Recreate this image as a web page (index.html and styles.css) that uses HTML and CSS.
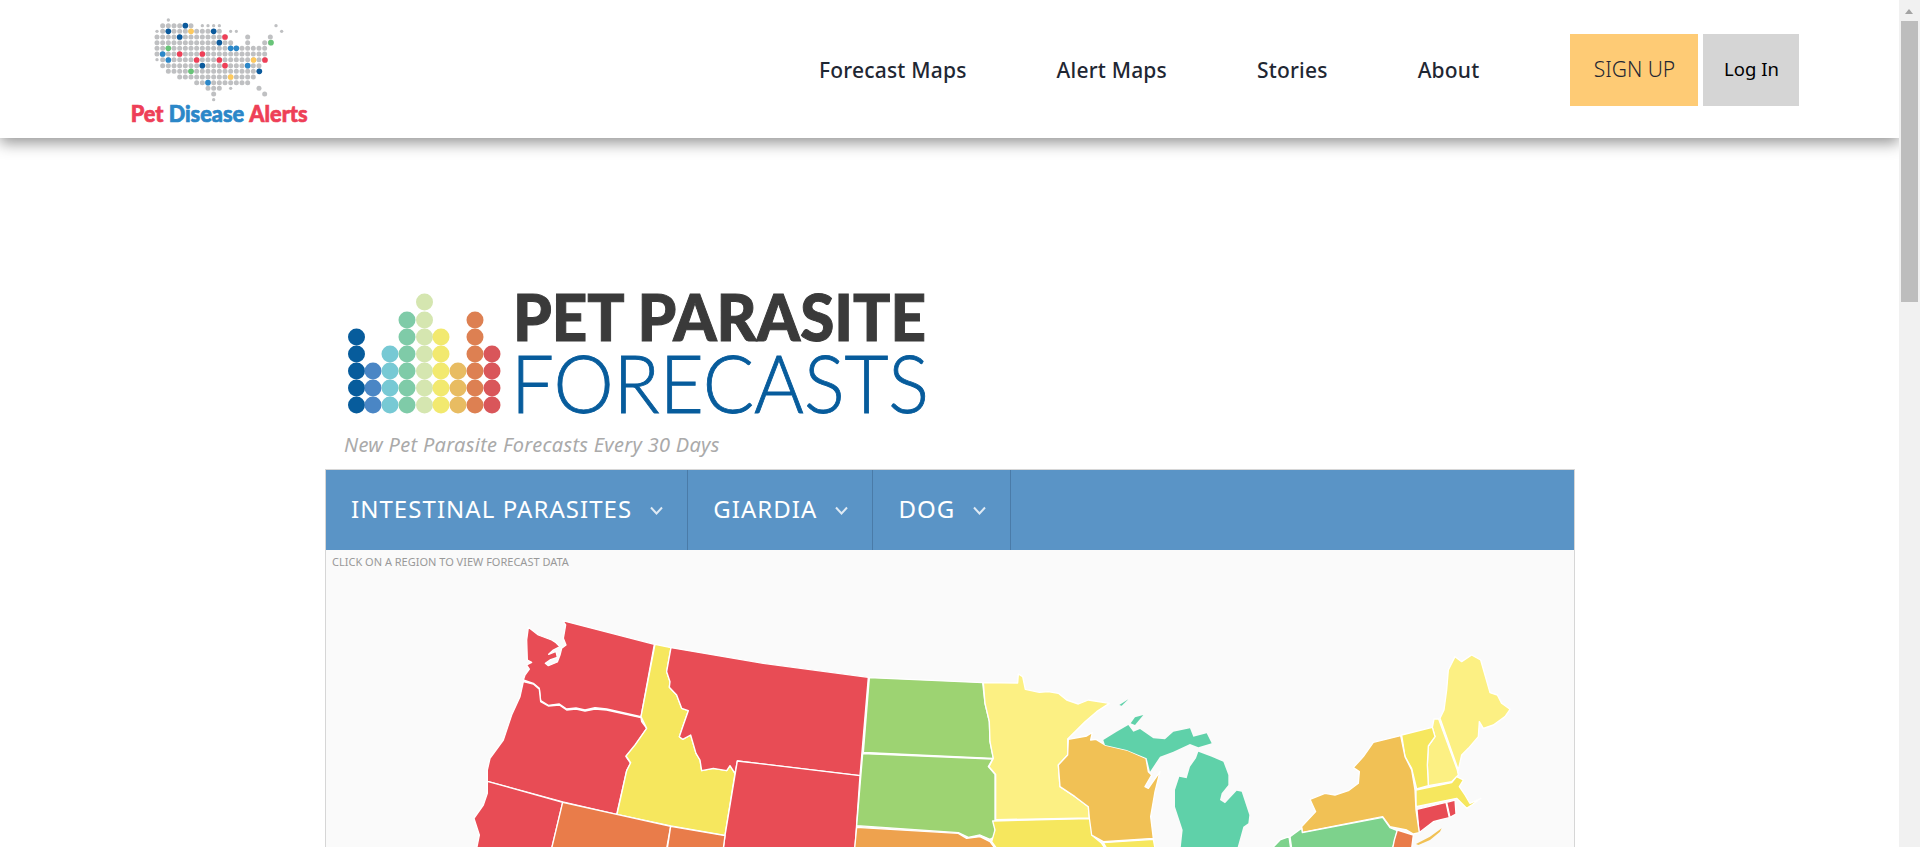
FILE: index.html
```html
<!DOCTYPE html>
<html lang="en">
<head>
<meta charset="utf-8">
<title>Pet Parasite Forecasts</title>
<link rel="stylesheet" href="styles.css">
</head>
<body>
<div class="page">
  <div class="main">
    <header class="topbar">
      <svg class="site-logo" viewBox="125 0 190 138" role="img" aria-label="Pet Disease Alerts">
        <g transform="translate(100 0) scale(.33333)">
          <g class="dots-small">
            <path d="M205,60H222"/><path d="M307,77H375"/><path d="M392,94H426"/><path d="M171,94H172"/><path d="M171,179H172"/><path d="M528,77H545"/><path d="M545,94H546"/><path d="M341,299H342"/><path d="M392,265H409"/>
          </g>
          <g class="dots">
            <path d="M188,77H290"/><path d="M188,94H375"/><path d="M171,111H392"/><path d="M443,111H444"/><path d="M511,111H528"/><path d="M171,128H409"/><path d="M443,128H444"/><path d="M494,128H528"/><path d="M171,145H511"/><path d="M171,162H511"/><path d="M188,179H511"/><path d="M188,197H494"/><path d="M205,214H494"/><path d="M239,231H477"/><path d="M290,248H460"/><path d="M324,265H375"/><path d="M477,265H478"/><path d="M341,282H342"/><path d="M494,282H495"/>
          </g>
          <g class="pin-navy"><circle cx="256" cy="77" r="8.5"/><circle cx="205" cy="94" r="8.5"/><circle cx="341" cy="94" r="8.5"/><circle cx="239" cy="111" r="8.5"/><circle cx="358" cy="128" r="8.5"/><circle cx="307" cy="197" r="8.5"/><circle cx="478" cy="214" r="8.5"/></g>
          <g class="pin-yellow"><circle cx="273" cy="94" r="8.5"/><circle cx="461" cy="180" r="8.5"/><circle cx="392" cy="231" r="8.5"/></g>
          <g class="pin-red"><circle cx="375" cy="111" r="8.5"/><circle cx="239" cy="162" r="8.5"/><circle cx="307" cy="162" r="8.5"/><circle cx="290" cy="180" r="8.5"/><circle cx="358" cy="180" r="8.5"/><circle cx="375" cy="197" r="8.5"/><circle cx="495" cy="180" r="8.5"/></g>
          <g class="pin-green"><circle cx="205" cy="145" r="8.5"/><circle cx="513" cy="128" r="8.5"/><circle cx="273" cy="214" r="8.5"/></g>
          <g class="pin-blue"><circle cx="392" cy="145" r="8.5"/><circle cx="409" cy="145" r="8.5"/><circle cx="188" cy="162" r="8.5"/><circle cx="205" cy="180" r="8.5"/><circle cx="443" cy="197" r="8.5"/><circle cx="324" cy="248" r="8.5"/></g>
          <text class="site-name" x="92" y="367" textLength="531" lengthAdjust="spacingAndGlyphs"><tspan class="t-red">Pet </tspan><tspan class="t-blue">Disease </tspan><tspan class="t-red">Alerts</tspan></text>
        </g>
      </svg>
      <nav class="nav">
        <a class="nav-link">Forecast Maps</a>
        <a class="nav-link">Alert Maps</a>
        <a class="nav-link">Stories</a>
        <a class="nav-link">About</a>
      </nav>
      <a class="btn btn-signup">SIGN UP</a>
      <a class="btn btn-login">Log In</a>
    </header>

    <section class="content">
      <svg class="forecast-logo" viewBox="340 265 660 168" role="img" aria-label="Pet Parasite Forecasts">
        <g class="c1"><circle cx="356.5" cy="405" r="8.5"/><circle cx="356.5" cy="388" r="8.5"/><circle cx="356.5" cy="371" r="8.5"/><circle cx="356.5" cy="354" r="8.5"/><circle cx="356.5" cy="337" r="8.5"/></g>
        <g class="c2"><circle cx="373" cy="405" r="8.5"/><circle cx="373" cy="388" r="8.5"/><circle cx="373" cy="371" r="8.5"/></g>
        <g class="c3"><circle cx="390" cy="405" r="8.5"/><circle cx="390" cy="388" r="8.5"/><circle cx="390" cy="371" r="8.5"/><circle cx="390" cy="354" r="8.5"/></g>
        <g class="c4"><circle cx="407" cy="405" r="8.5"/><circle cx="407" cy="388" r="8.5"/><circle cx="407" cy="371" r="8.5"/><circle cx="407" cy="354" r="8.5"/><circle cx="407" cy="337" r="8.5"/><circle cx="407" cy="320" r="8.5"/></g>
        <g class="c5"><circle cx="424.5" cy="405" r="8.5"/><circle cx="424.5" cy="388" r="8.5"/><circle cx="424.5" cy="371" r="8.5"/><circle cx="424.5" cy="354" r="8.5"/><circle cx="424.5" cy="337" r="8.5"/><circle cx="424.5" cy="320" r="8.5"/><circle cx="424.5" cy="302" r="8.5"/></g>
        <g class="c6"><circle cx="441" cy="405" r="8.5"/><circle cx="441" cy="388" r="8.5"/><circle cx="441" cy="371" r="8.5"/><circle cx="441" cy="354" r="8.5"/><circle cx="441" cy="337" r="8.5"/></g>
        <g class="c7"><circle cx="458" cy="405" r="8.5"/><circle cx="458" cy="388" r="8.5"/><circle cx="458" cy="371" r="8.5"/></g>
        <g class="c8"><circle cx="475" cy="405" r="8.5"/><circle cx="475" cy="388" r="8.5"/><circle cx="475" cy="371" r="8.5"/><circle cx="475" cy="354" r="8.5"/><circle cx="475" cy="337" r="8.5"/><circle cx="475" cy="320" r="8.5"/></g>
        <g class="c9"><circle cx="492" cy="405" r="8.5"/><circle cx="492" cy="388" r="8.5"/><circle cx="492" cy="371" r="8.5"/><circle cx="492" cy="354" r="8.5"/></g>
        <text class="fl-top" x="513" y="341" textLength="413" lengthAdjust="spacingAndGlyphs">PET PARASITE</text>
        <text class="fl-bottom" x="511" y="413" textLength="418" lengthAdjust="spacingAndGlyphs">FORECASTS</text>
      </svg>
      <p class="tagline">New Pet Parasite Forecasts Every 30 Days</p>

      <div class="panel">
        <div class="menu">
          <div class="menu-item"><span>INTESTINAL PARASITES</span><svg class="chev" viewBox="0 0 13 9"><path d="M1,1.5 6.5,7.5 12,1.5"/></svg></div>
          <div class="menu-item"><span>GIARDIA</span><svg class="chev" viewBox="0 0 13 9"><path d="M1,1.5 6.5,7.5 12,1.5"/></svg></div>
          <div class="menu-item"><span>DOG</span><svg class="chev" viewBox="0 0 13 9"><path d="M1,1.5 6.5,7.5 12,1.5"/></svg></div>
        </div>
        <div class="map-area">
          <p class="hint">CLICK ON A REGION TO VIEW FORECAST DATA</p>
          <svg class="map" viewBox="326 572 1248 275" aria-label="Map of forecast regions">
            <g class="states" transform="translate(470 600) scale(.33333)">
              <path class="red" d="M278,62 L553,133 L513,350 L410,327 L375,323 L345,330 L318,324 L290,327 L268,312 L235,316 L212,302 L208,265 L190,250 L160,240 L165,225 L178,207 L170,195 L185,187 L172,180 L170,120 L175,82 L205,105 L245,120 L258,128 L270,140 L250,150 L236,163 L258,154 L262,172 L240,180 L226,190 L235,197 L262,186 L270,165 L275,145 L288,135 L280,115 L287,75 Z"/>
              <path class="red" d="M160,245 L190,252 L208,268 L212,305 L235,318 L268,315 L290,330 L318,327 L345,333 L375,327 L410,330 L513,353 L515,365 L530,385 L495,437 L468,470 L482,490 L470,512 L440,643 L278,606 L52,544 L52,510 L60,475 L100,420 L125,345 L150,290 Z"/>
              <path class="yellow" d="M555,133 L603,143 L590,215 L600,245 L598,262 L620,285 L635,325 L655,332 L640,375 L628,410 L638,418 L662,405 L678,460 L690,480 L695,512 L730,505 L770,512 L780,497 L795,520 L765,706 L602,678 L441,643 L470,512 L482,488 L468,468 L495,435 L530,385 L513,350 Z"/>
              <path class="red" d="M603,143 L880,190 L1195,232 L1170,527 L802,483 L795,520 L780,497 L770,512 L730,505 L695,512 L690,480 L678,460 L662,405 L638,418 L628,410 L640,375 L655,332 L635,325 L620,285 L598,262 L600,245 L590,215 Z"/>
              <path class="red" d="M802,483 L1170,527 L1155,745 L760,745 L765,707 Z"/>
              <path class="red" d="M52,544 L278,607 L245,745 L20,745 L28,705 L12,655 L40,615 L52,580 Z"/>
              <path class="orange" d="M278,607 L602,679 L590,745 L245,745 Z"/>
              <path class="orange" d="M602,679 L765,707 L760,745 L592,745 Z"/>
            </g>
            <g class="states" transform="translate(840 660) scale(.33333)">
              <path class="green" d="M88,53 L428,68 L435,130 L448,185 L450,245 L460,295 L70,277 Z"/>
              <path class="green" d="M68,281 L458,297 L445,320 L465,343 L465,530 L450,538 L420,525 L385,532 L355,518 L50,497 Z"/>
              <path class="amber" d="M50,502 L355,520 L380,535 L420,530 L450,545 L465,565 L44,565 Z"/>
              <path class="pale" d="M430,68 L533,69 L535,42 L548,50 L556,88 L598,97 L625,95 L655,100 L680,120 L715,132 L745,120 L808,130 L770,155 L735,185 L683,237 L683,285 L655,315 L660,380 L705,410 L745,440 L748,474 L467,479 L467,343 L447,320 L460,295 L450,245 L448,185 L435,130 Z"/>
              <path class="yellow" d="M458,483 L748,476 L755,490 L755,525 L785,550 L795,565 L470,565 L455,545 L465,510 Z"/>
              <path class="tan" d="M685,238 L740,228 L757,217 L752,240 L768,238 L795,255 L860,270 L918,295 L925,335 L935,345 L915,380 L925,385 L960,335 L945,395 L932,470 L940,535 L790,545 L755,525 L748,474 L745,440 L705,410 L660,380 L655,315 L683,285 Z"/>
              <path class="yellow" d="M790,548 L940,538 L945,565 L800,565 Z"/>
              <path class="teal plain" d="M790,240 L830,215 L865,195 L880,215 L900,207 L940,235 L975,238 L1000,215 L1050,205 L1060,230 L1100,220 L1115,250 L1075,262 L1050,252 L1000,275 L960,290 L940,320 L930,335 L920,295 L860,270 L795,255 Z"/>
              <path class="teal plain" d="M872,190 L885,172 L910,165 L885,195 Z"/>
              <path class="teal plain" d="M838,135 L865,118 L845,137 Z"/>
              <path class="teal plain" d="M1075,275 L1115,290 L1150,305 L1165,345 L1165,375 L1145,400 L1140,420 L1155,430 L1190,392 L1205,395 L1228,465 L1225,490 L1210,500 L1192,565 L1022,565 L1028,510 L1005,440 L1005,390 L1018,350 L1040,355 L1050,320 L1068,295 Z"/>
            </g>
            <g class="states" transform="translate(1200 640) scale(.33333)">
              <path class="pale" d="M765,50 L785,65 L815,45 L842,60 L870,158 L892,165 L905,190 L930,208 L915,230 L880,255 L850,265 L838,245 L835,290 L805,325 L785,345 L775,390 L720,235 L732,210 L740,150 L745,90 Z"/>
              <path class="pale" d="M702,237 L716,237 L772,390 L775,405 L755,425 L685,437 L682,375 L685,318 L705,290 L697,262 Z"/>
              <path class="yellow" d="M605,285 L697,262 L705,290 L685,318 L682,375 L685,437 L650,447 L635,385 L615,350 Z"/>
              <path class="yellow" d="M648,450 L755,428 L770,410 L790,420 L778,440 L795,465 L810,490 L843,475 L815,495 L800,505 L770,475 L648,500 Z"/>
              <path class="red" d="M651,508 L738,487 L748,533 L720,540 L700,545 L657,578 Z"/>
              <path class="red" d="M740,487 L765,480 L768,522 L750,532 Z"/>
              <path class="tan" d="M602,287 L615,350 L635,390 L645,450 L648,510 L658,578 L640,582 L620,570 L570,560 L548,530 L307,577 L305,560 L347,515 L330,478 L375,460 L405,465 L445,452 L475,430 L478,395 L460,383 L490,350 L520,307 Z"/>
              <path class="tan plain" d="M648,612 L690,590 L725,565 L720,575 L690,600 L655,615 Z"/>
              <path class="mint" d="M270,590 L305,565 L307,578 L548,532 L570,563 L592,572 L578,625 L275,625 Z"/>
              <path class="mint" d="M220,621 L240,600 L267,590 L272,625 L220,625 Z"/>
              <path class="orange" d="M592,570 L640,585 L635,625 L578,625 L583,600 Z"/>
            </g>
          </svg>
        </div>
      </div>
    </section>
  </div>
  <aside class="scrollbar" aria-hidden="true">
    <div class="sb-arrow"></div>
    <div class="sb-thumb"></div>
  </aside>
</div>
</body>
</html>
```

FILE: styles.css
```css
* { box-sizing: border-box; }
html, body { margin: 0; height: 100%; overflow: hidden; background: #fff; }
body { font-family: "Noto Sans", "Open Sans", sans-serif; }

.page { display: flex; height: 847px; overflow: hidden; }
.main { flex: 1; min-width: 0; overflow: hidden; }

/* header */
.topbar {
  position: relative;
  z-index: 2;
  display: flex;
  align-items: flex-start;
  height: 138px;
  padding-left: 125px;
  background: #fff;
  box-shadow: 0 5px 14px rgba(0, 0, 0, .42);
}
.site-logo { display: block; width: 190px; height: 138px; flex: none; }
.dots path, .dots-small path { fill: none; stroke: #bfc0c2; stroke-linecap: round; stroke-dasharray: 0 17; }
.dots path { stroke-width: 15; }
.dots-small path { stroke-width: 10; }
.pin-navy { fill: #0b5a9c; }
.pin-yellow { fill: #fdc95e; }
.pin-red { fill: #ee3f57; }
.pin-green { fill: #68c478; }
.pin-blue { fill: #2b87c8; }
.site-name { font-family: "Lato", sans-serif; font-weight: 900; font-size: 68px; stroke-width: 2; }
.t-red { fill: #ee3f57; stroke: #ee3f57; }
.t-blue { fill: #2b87c8; stroke: #2b87c8; }

.nav { display: flex; margin-left: 459px; padding-top: 55px; }
.nav-link {
  padding: 0 45px;
  font-size: 21px;
  letter-spacing: .2px;
  line-height: 30px;
  font-weight: 500;
  color: #1f2733;
  white-space: nowrap;
}
.btn {
  display: flex;
  align-items: center;
  justify-content: center;
  margin-top: 34px;
  height: 72px;
  white-space: nowrap;
}
.btn-signup { width: 128px; margin-left: 46px; background: #fecb75; color: #1f2733; font-size: 21px; font-weight: 300; padding-bottom: 2px; }
.btn-login { width: 96px; margin-left: 5px; background: #d5d5d5; color: #000; font-size: 18.5px; padding-bottom: 4px; }

/* forecast heading */
.content { padding: 127px 0 0 325px; }
.forecast-logo { display: block; width: 660px; height: 168px; margin-left: 15px; }
.c1 { fill: #075c9c; }
.c2 { fill: #4a86c5; }
.c3 { fill: #77c9d4; }
.c4 { fill: #7fcba8; }
.c5 { fill: #d5e6b0; }
.c6 { fill: #f2e96f; }
.c7 { fill: #e8bc62; }
.c8 { fill: #dd8052; }
.c9 { fill: #d9565a; }
.fl-top { font-family: "Lato", sans-serif; font-weight: 900; font-size: 65px; fill: #3a3a3a; stroke: #3a3a3a; stroke-width: 1; }
.fl-bottom { font-family: "Lato", sans-serif; font-weight: 300; font-size: 80px; fill: #075c9c; stroke: #075c9c; stroke-width: .9; }

.tagline {
  margin: 0;
  padding: 0 0 0 19px;
  height: 36px;
  font-size: 20px;
  letter-spacing: .3px;
  line-height: 24px;
  font-style: italic;
  color: #aaa;
  white-space: nowrap;
}

/* panel */
.panel { width: 1250px; height: 400px; border: 1px solid #d6d6d6; background: #fafafa; }
.menu { display: flex; height: 80px; background: #5a94c6; }
.menu-item {
  display: flex;
  align-items: center;
  gap: 18px;
  padding: 0 24px 3px 25px;
  border-right: 1px solid #4a7ba8;
  color: #fff;
  font-size: 24px;
  letter-spacing: 1.05px;
}
.chev { display: block; width: 13px; height: 9px; margin-top: 3px; }
.chev path { fill: none; stroke: #dfeaf4; stroke-width: 2; }

.map-area { background: #fafafa; }
.hint { margin: 0; padding: 5px 0 0 6px; height: 22px; font-size: 11px; line-height: 14px; color: #999; }
.map { display: block; width: 1248px; height: 275px; }
.states path { stroke: #fff; stroke-width: 4; stroke-linejoin: round; }
.states path.plain { stroke: none; }
.red { fill: #e84c55; }
.yellow { fill: #f6e75e; }
.pale { fill: #fcf083; }
.orange { fill: #e97c4a; }
.amber { fill: #eea24e; }
.tan { fill: #f1c155; }
.green { fill: #9dd372; }
.mint { fill: #7dd28c; }
.teal { fill: #5fd1a9; }

/* scrollbar */
.scrollbar { flex: none; width: 21px; background: #f1f1f1; }
.sb-arrow { position: relative; height: 21px; }
.sb-arrow::after {
  content: "";
  position: absolute;
  left: 6px;
  top: 9px;
  border-left: 4.5px solid transparent;
  border-right: 4.5px solid transparent;
  border-bottom: 5px solid #a3a3a3;
}
.sb-thumb { height: 281px; margin: 0 2px; background: #bdbdbd; }
```
